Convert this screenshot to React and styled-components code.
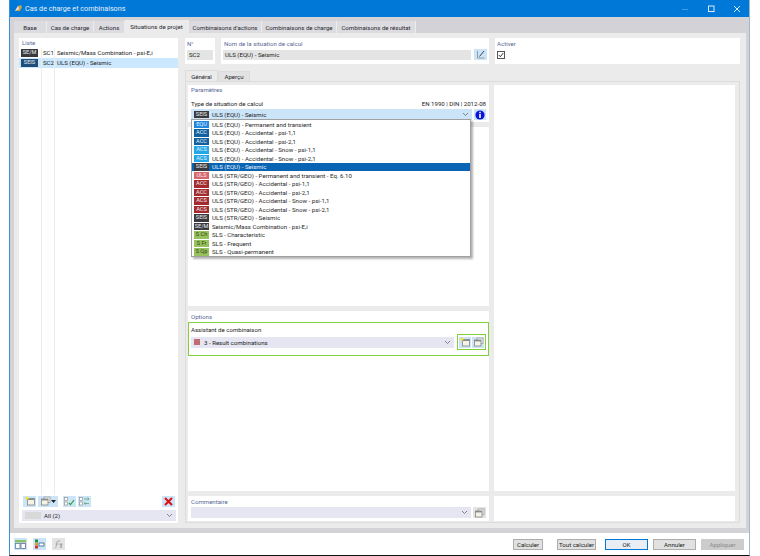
import React from "react";
import styled, { createGlobalStyle } from "styled-components";

const Global = createGlobalStyle`
  html, body { margin: 0; padding: 0; background: #fff; }
  body { width: 760px; height: 556px; overflow: hidden; font-family: Roboto, "Noto Sans", sans-serif; font-size: 6.1px; color: #222; }
  * { box-sizing: border-box; }
`;

const Win = styled.div`
  width: 741px; height: 556px; margin-left: 9px;
  display: flex; flex-direction: column;
  border-left: 1px solid #3d8fd8; border-right: 1px solid #9db8d0; border-bottom: 1px solid #111;
  position: relative;
`;
const TitleBar = styled.div`
  height: 17px; background: #0078d7; color: #e6f1fb;
  display: flex; align-items: center; padding: 0 0 0 4px; gap: 2px; font-size: 7.2px;
`;
const TitleText = styled.span`flex: 1;`;
const WinBtn = styled.span`width: 24px; display: flex; justify-content: center; opacity: ${(p) => p.$dim ? 0.25 : 0.85};`;

const Body = styled.div`
  flex: 1; min-height: 0; background: #d3d3d7;
  display: flex; flex-direction: column; padding: 0 3px 5px 4px;
`;
const TabStrip = styled.div`
  height: 16px; display: flex; align-items: flex-end; flex: none;
`;
const Tab = styled.div`
  width: ${(p) => p.$w}px; height: ${(p) => (p.$active ? 13 : 12)}px;
  display: flex; align-items: center; justify-content: center; white-space: nowrap;
  background: ${(p) => (p.$active ? "#ebebeb" : "#dcdce0")};
  border-right: 1px solid #ececec; color: #26262e;
`;
const Inner = styled.div`
  flex: 1; min-height: 0; background: #ebebeb; padding: 5px 6px 5px 5px; display: flex; gap: 7px;
`;
const ListPanel = styled.div`
  width: 159px; background: #fff; display: flex; flex-direction: column; position: relative; flex: none;
`;
const Caption = styled.div`
  color: #5a6a96; height: ${(p) => p.$h || 12}px; line-height: ${(p) => p.$h || 12}px; padding-left: ${(p) => p.$pad ?? 3}px;
`;
const ListRows = styled.div`flex: 1; position: relative;`;
const ListRow = styled.div`
  height: 9.5px; display: flex; align-items: center; padding-left: 2px;
  background: ${(p) => (p.$sel ? "#cce8ff" : "transparent")};
  margin-bottom: 0.5px;
`;
const RowCode = styled.span`width: 15px; margin-left: 5px; margin-right: -1px;`;
const Rule = styled.div`
  position: absolute; top: 0; bottom: 0; left: ${(p) => p.$x}px; width: 1px; background: #ececec;
`;
const Badge = styled.span`
  flex: none; width: ${(p) => p.$w || 15}px; height: 7.5px; line-height: 7.5px; text-align: center;
  background: ${(p) => p.$bg}; color: ${(p) => p.$fg || "#e8eef4"}; font-size: 5.6px; overflow: hidden; white-space: nowrap;
`;
const ListTools = styled.div`
  display: flex; align-items: center; height: 12px; padding: 0 3px 0 4px; gap: 2px; margin-bottom: 3px;
`;
const IconBtn = styled.span`
  flex: none; width: ${(p) => p.$w || 13}px; height: ${(p) => p.$h || 11}px;
  background: ${(p) => p.$bg || "#cce4f7"}; display: flex; align-items: center; justify-content: center;
  margin-left: ${(p) => p.$ml || 0}px; margin-right: ${(p) => p.$mr || 0}px;
`;
const Push = styled.span`flex: 1;`;
const Combo = styled.div`
  height: 11px; background: ${(p) => p.$bg || "#e6e6f2"}; display: flex; align-items: center; gap: ${(p) => p.$gap || 3}px;
  padding: 0 3px; flex: ${(p) => (p.$grow ? 1 : "none")};
  margin: ${(p) => p.$m || 0};
`;
const Chevron = styled.svg`margin-left: auto; flex: none;`;
const Swatch = styled.span`
  flex: none; width: ${(p) => p.$w}px; height: ${(p) => p.$h}px; background: ${(p) => p.$bg};
`;

const Right = styled.div`flex: 1; min-width: 0; display: flex; flex-direction: column;`;
const TopRow = styled.div`display: flex; gap: 6px; height: 26px; flex: none;`;
const TopCell = styled.div`
  background: #fff; width: ${(p) => p.$w}px; flex: ${(p) => (p.$w ? "none" : 1)}; padding: 0 2px; display: flex; flex-direction: column;
`;
const Field = styled.div`
  height: 10px; background: #e4e4e4; line-height: 10px; padding: 0 2px; flex: 1;
`;
const CellRow = styled.div`display: flex; gap: 3px; align-items: center; height: 11px;`;
const Check = styled.span`
  width: 8px; height: 8px; border: 1px solid #555; display: flex; align-items: center; justify-content: center; background: #fff;
`;
const InnerTabs = styled.div`display: flex; height: 11px; margin-top: 6px; align-items: flex-end; flex: none;`;
const InnerTab = styled.div`
  width: ${(p) => p.$w}px; height: ${(p) => (p.$active ? 11 : 10)}px; display: flex; align-items: center; justify-content: center;
  background: ${(p) => (p.$active ? "#ebebeb" : "#e2e2e2")}; color: #26262e;
  border: 1px solid #dcdcdc; border-bottom: none;
`;
const Frame = styled.div`
  flex: 1; min-height: 0; border: 1px solid #dcdcdc; padding: 3px 3px 3px 2px; display: grid;
  grid-template-columns: 301px 241px; column-gap: 5px;
  grid-template-rows: 37px 179px 180px 25px;
  row-gap: 5px; position: relative;
`;
const FramePanel = styled.div`
  background: #fff; padding: 0 3px; position: relative; display: flex; flex-direction: column;
  grid-column: ${(p) => p.$col || 1}; grid-row: ${(p) => p.$row};
`;
const Label = styled.div`
  display: flex; justify-content: space-between; height: 9px; line-height: 9px; margin-top: ${(p) => p.$mt || 0}px;
`;
const TypeRow = styled.div`display: flex; gap: 2px; align-items: center; margin-top: ${(p) => p.$mt || 0}px;`;
const Popup = styled.div`
  position: absolute; left: 5px; top: 37px; width: 280px; height: 138px; background: #fff; z-index: 5;
  border: 1px solid #a0a0a0; box-shadow: 2px 2px 2px rgba(0,0,0,0.3);
  display: grid; grid-auto-rows: 8.5px;
`;
const PopRow = styled.div`
  display: flex; align-items: center; gap: 3px; padding-left: 2px; white-space: nowrap;
  background: ${(p) => (p.$sel ? "#0a64b4" : "transparent")}; color: ${(p) => (p.$sel ? "#e6f1fb" : "#2a2a2a")};
`;
const GreenFrame = styled.div`
  border: 1.5px solid #7fd03c; margin: 0 -3px; padding: 2px 2px; height: 34px; display: flex; flex-direction: column;
`;
const GreenBtns = styled.div`
  border: 1.5px solid #7fd03c; display: flex; gap: 1px; padding: 0 1px; height: 16px; align-items: center; margin-left: 3px;
`;
const OptionsRow = styled.div`display: flex; align-items: center;`;
const Footer = styled.div`
  height: 22px; background: #fff; display: flex; align-items: center; padding: 0 5px 0 4px; flex: none;
`;
const FootIcon = styled.span`
  width: 13px; height: 12px; background: ${(p) => p.$bg || "#cce4f7"}; display: flex; align-items: center; justify-content: center;
  margin-right: 6px;
`;
const Btn = styled.div`
  width: ${(p) => p.$w}px; height: 11px; margin-left: ${(p) => p.$ml}px; line-height: 9px; text-align: center; white-space: nowrap;
  background: ${(p) => (p.$off ? "#ccc" : "#e1e1e1")}; color: ${(p) => (p.$off ? "#8a8a8a" : "#222")};
  border: 1px solid ${(p) => (p.$primary ? "#0078d7" : p.$off ? "#ccc" : "#adadad")};
  ${(p) => p.$primary && "background: #e8eef4;"}
`;

const down = (
  <Chevron width="7" height="5" viewBox="0 0 7 5"><path d="M1 1l2.5 2.5L6 1" fill="none" stroke="#777" strokeWidth="0.9" /></Chevron>
);
const NewIcon = () => (
  <svg width="12" height="10" viewBox="0 0 12 10">
    <rect x="3.5" y="2.5" width="7" height="6.5" fill="#f5f3e6" stroke="#777" strokeWidth="0.7" />
    <rect x="3.5" y="2.5" width="7" height="1.5" fill="#8a8a8a" />
    <path d="M3 0l.7 1.6L5.6 2.3 3.7 3 3 4.6 2.3 3 .4 2.3l1.9-.7z" fill="#f7e21c" />
  </svg>
);
const CopyIcon = () => (
  <svg width="11" height="10" viewBox="0 0 11 10">
    <rect x="4" y="1" width="6" height="5.5" fill="#eee" stroke="#888" strokeWidth="0.6" />
    <rect x="1.5" y="3" width="6.5" height="6" fill="#f5f3e6" stroke="#777" strokeWidth="0.7" />
    <rect x="1.5" y="3" width="6.5" height="1.4" fill="#8a8a8a" />
  </svg>
);
const CheckList = ({ alt }) => (
  <svg width="11" height="9" viewBox="0 0 11 9">
    <rect x="0.5" y="0.5" width="3" height="3" fill="#fff" stroke="#888" strokeWidth="0.6" />
    <rect x="0.5" y="5" width="3" height="3" fill="#fff" stroke="#888" strokeWidth="0.6" />
    {alt ? (
      <path d="M5 2h5M5 6.5h5M8.5 0.8L10 2 8.5 3.2M6.5 5.3L5 6.5l1.5 1.2" fill="none" stroke="#55a868" strokeWidth="0.8" />
    ) : (
      <path d="M5 6l1.5 1.6L10 3" fill="none" stroke="#2fa03c" strokeWidth="1.2" />
    )}
  </svg>
);

const B = { d: "#3a3a3e", n: "#1f4e79", e: "#1e88e0", a: "#10609f", c: "#22a7e8", u: "#d9656b", r: "#a52a2e", g: "#96c15c" };
const items = [
  ["EQU", B.e, "ULS (EQU) - Permanent and transient"],
  ["ACC", B.a, "ULS (EQU) - Accidental - psi-1,1"],
  ["ACC", B.a, "ULS (EQU) - Accidental - psi-2,1"],
  ["ACS", B.c, "ULS (EQU) - Accidental - Snow - psi-1,1"],
  ["ACS", B.c, "ULS (EQU) - Accidental - Snow - psi-2,1"],
  ["SEIS", B.d, "ULS (EQU) - Seismic", true],
  ["ULS", B.u, "ULS (STR/GEO) - Permanent and transient - Eq. 6.10"],
  ["ACC", B.r, "ULS (STR/GEO) - Accidental - psi-1,1"],
  ["ACC", B.r, "ULS (STR/GEO) - Accidental - psi-2,1"],
  ["ACS", B.r, "ULS (STR/GEO) - Accidental - Snow - psi-1,1"],
  ["ACS", B.r, "ULS (STR/GEO) - Accidental - Snow - psi-2,1"],
  ["SEIS", B.d, "ULS (STR/GEO) - Seismic"],
  ["SE/M", B.d, "Seismic/Mass Combination - psi-E,i"],
  ["S Ch", B.g, "SLS - Characteristic"],
  ["S Fr", B.g, "SLS - Frequent"],
  ["S Qp", B.g, "SLS - Quasi-permanent"],
];

const tabs = [
  ["Base", 33], ["Cas de charge", 47], ["Actions", 31], ["Situations de projet", 64, true],
  ["Combinaisons d'actions", 73], ["Combinaisons de charge", 75], ["Combinaisons de résultat", 79],
];

export default function App() {
  return (
    <>
      <Global />
      <Win>
        <TitleBar>
          <svg width="9" height="9" viewBox="0 0 9 9">
            <path d="M1 7l3-5 3-1 1 2-2 4z" fill="#c9a24a" />
            <path d="M1 7l3-5 1 3z" fill="#dfe6ee" />
          </svg>
          <TitleText>Cas de charge et combinaisons</TitleText>
          <WinBtn $dim><svg width="8" height="8" viewBox="0 0 8 8"><path d="M1 4.5h6" stroke="#fff" /></svg></WinBtn>
          <WinBtn><svg width="8" height="8" viewBox="0 0 8 8"><rect x="1.5" y="1" width="5.5" height="5.5" fill="none" stroke="#fff" /></svg></WinBtn>
          <WinBtn><svg width="8" height="8" viewBox="0 0 8 8"><path d="M1 1l6 6M7 1L1 7" stroke="#fff" /></svg></WinBtn>
        </TitleBar>
        <Body>
          <TabStrip>
            {tabs.map(([t, w, a]) => <Tab key={t} $w={w} $active={a}>{t}</Tab>)}
          </TabStrip>
          <Inner>
            <ListPanel>
              <Caption $h={10}>Liste</Caption>
              <ListRows>
                <Rule $x={22} />
                <Rule $x={35} />
                <ListRow><Badge $w={17} $bg={B.d}>SE/M</Badge><RowCode>SC1</RowCode>Seismic/Mass Combination - psi-E,i</ListRow>
                <ListRow $sel><Badge $w={17} $bg={B.n}>SEIS</Badge><RowCode>SC2</RowCode>ULS (EQU) - Seismic</ListRow>
              </ListRows>
              <ListTools>
                <IconBtn><NewIcon /></IconBtn>
                <IconBtn $w={20}><CopyIcon /><svg width="5" height="3" viewBox="0 0 5 3"><path d="M0 0h5L2.5 3z" fill="#222" /></svg></IconBtn>
                <IconBtn $ml={3}><CheckList /></IconBtn>
                <IconBtn><CheckList alt /></IconBtn>
                <Push />
                <IconBtn>
                  <svg width="9" height="9" viewBox="0 0 9 9"><path d="M1 1l7 7M8 1L1 8" stroke="#e01010" strokeWidth="2" /></svg>
                </IconBtn>
              </ListTools>
              <Combo $m="0 2px 2px 3px">
                <Swatch $w={16} $h={7} $bg="#d8d8d8" />All (2){down}
              </Combo>
            </ListPanel>
            <Right>
              <TopRow>
                <TopCell $w={30}>
                  <Caption $h={11} $pad={0}>N°</Caption>
                  <CellRow><Field>SC2</Field></CellRow>
                </TopCell>
                <TopCell $w={268}>
                  <Caption $h={11} $pad={1}>Nom de la situation de calcul</Caption>
                  <CellRow><Field>ULS (EQU) - Seismic</Field>
                    <IconBtn>
                      <svg width="10" height="9" viewBox="0 0 10 9"><path d="M1.5 1v7h7" fill="none" stroke="#888" strokeWidth="0.8" /><path d="M3.5 6.5L8 1" stroke="#444" strokeWidth="1" /></svg>
                    </IconBtn>
                  </CellRow>
                </TopCell>
                <TopCell>
                  <Caption $h={11} $pad={0}>Activer</Caption>
                  <CellRow>
                    <Check><svg width="6" height="6" viewBox="0 0 6 6"><path d="M0.8 3l1.5 1.7L5.3 1" fill="none" stroke="#222" strokeWidth="0.9" /></svg></Check>
                  </CellRow>
                </TopCell>
              </TopRow>
              <InnerTabs>
                <InnerTab $w={33} $active>Général</InnerTab>
                <InnerTab $w={32}>Aperçu</InnerTab>
              </InnerTabs>
              <Frame>
                <FramePanel $row={1}>
                  <Caption $h={10} $pad={0}>Paramètres</Caption>
                  <Label $mt={4}><span>Type de situation de calcul</span><span>EN 1990 | DIN | 2012-08</span></Label>
                  <TypeRow $mt={1}>
                    <Combo $bg="#cce4f7" $grow>
                      <Badge $bg={B.d}>SEIS</Badge>ULS (EQU) - Seismic{down}
                    </Combo>
                    <IconBtn $w={12}>
                      <svg width="10" height="10" viewBox="0 0 10 10"><circle cx="5" cy="5" r="4.6" fill="#0a14d8" /><rect x="4.2" y="1.8" width="1.6" height="1.4" fill="#fff" /><rect x="4.2" y="4" width="1.6" height="4" fill="#fff" /></svg>
                    </IconBtn>
                  </TypeRow>
                </FramePanel>
                <FramePanel $col={2} $row="1 / 4" />
                <FramePanel $row={2} />
                <FramePanel $row={3}>
                  <Caption $h={11} $pad={0}>Options</Caption>
                  <GreenFrame>
                    <Label>Assistant de combinaison</Label>
                    <OptionsRow>
                      <Combo $grow $gap={4}>
                        <Swatch $w={6} $h={6} $bg="#c06a72" />3 - Result combinations{down}
                      </Combo>
                      <GreenBtns>
                        <IconBtn $w={12}><NewIcon /></IconBtn>
                        <IconBtn $w={12}><CopyIcon /></IconBtn>
                      </GreenBtns>
                    </OptionsRow>
                  </GreenFrame>
                </FramePanel>
                <FramePanel $row={4}>
                  <Caption $h={11} $pad={0}>Commentaire</Caption>
                  <TypeRow>
                    <Combo $grow>{down}</Combo>
                    <IconBtn $w={13} $bg="#e4e4e4">
                      <CopyIcon />
                    </IconBtn>
                  </TypeRow>
                </FramePanel>
                <FramePanel $col={2} $row={4} />
                <Popup>
                  {items.map(([b, c, t, s]) => (
                    <PopRow key={t} $sel={s}><Badge $bg={c} $fg={c === B.g ? "#2f4212" : undefined}>{b}</Badge>{t}</PopRow>
                  ))}
                </Popup>
              </Frame>
            </Right>
          </Inner>
        </Body>
        <Footer>
          <FootIcon>
            <svg width="11" height="9" viewBox="0 0 11 9"><rect width="11" height="2.5" fill="#8cc06a" /><rect y="3.5" x="0.5" width="4.5" height="5" fill="#fff" stroke="#5a7fa8" strokeWidth="0.8" /><rect y="3.5" x="6" width="4.5" height="5" fill="#fff" stroke="#6a6a9a" strokeWidth="0.8" /></svg>
          </FootIcon>
          <FootIcon>
            <svg width="11" height="10" viewBox="0 0 11 10"><rect x="1" y="0.5" width="3" height="3" fill="#2a8a3a" /><rect x="1" y="4" width="3" height="2" fill="#e0a020" /><rect x="1" y="6.5" width="3" height="3" fill="#c33" /><rect x="5" y="4" width="5" height="3" fill="#fff" stroke="#1f4e79" strokeWidth="0.7" /></svg>
          </FootIcon>
          <FootIcon $bg="#e4e4e4">
            <svg width="11" height="9" viewBox="0 0 11 9"><path d="M2 8c2 0 1-7 3-7h2M2.5 4h3M6.5 4h3M7 8l2-4M7 4l2 4" fill="none" stroke="#999" strokeWidth="0.8" /></svg>
          </FootIcon>
          <Btn $w={30} $ml={442}>Calculer</Btn>
          <Btn $w={39} $ml={14}>Tout calculer</Btn>
          <Btn $w={43} $ml={9} $primary>OK</Btn>
          <Btn $w={43} $ml={5}>Annuler</Btn>
          <Btn $w={43} $ml={5} $off>Appliquer</Btn>
        </Footer>
      </Win>
    </>
  );
}
